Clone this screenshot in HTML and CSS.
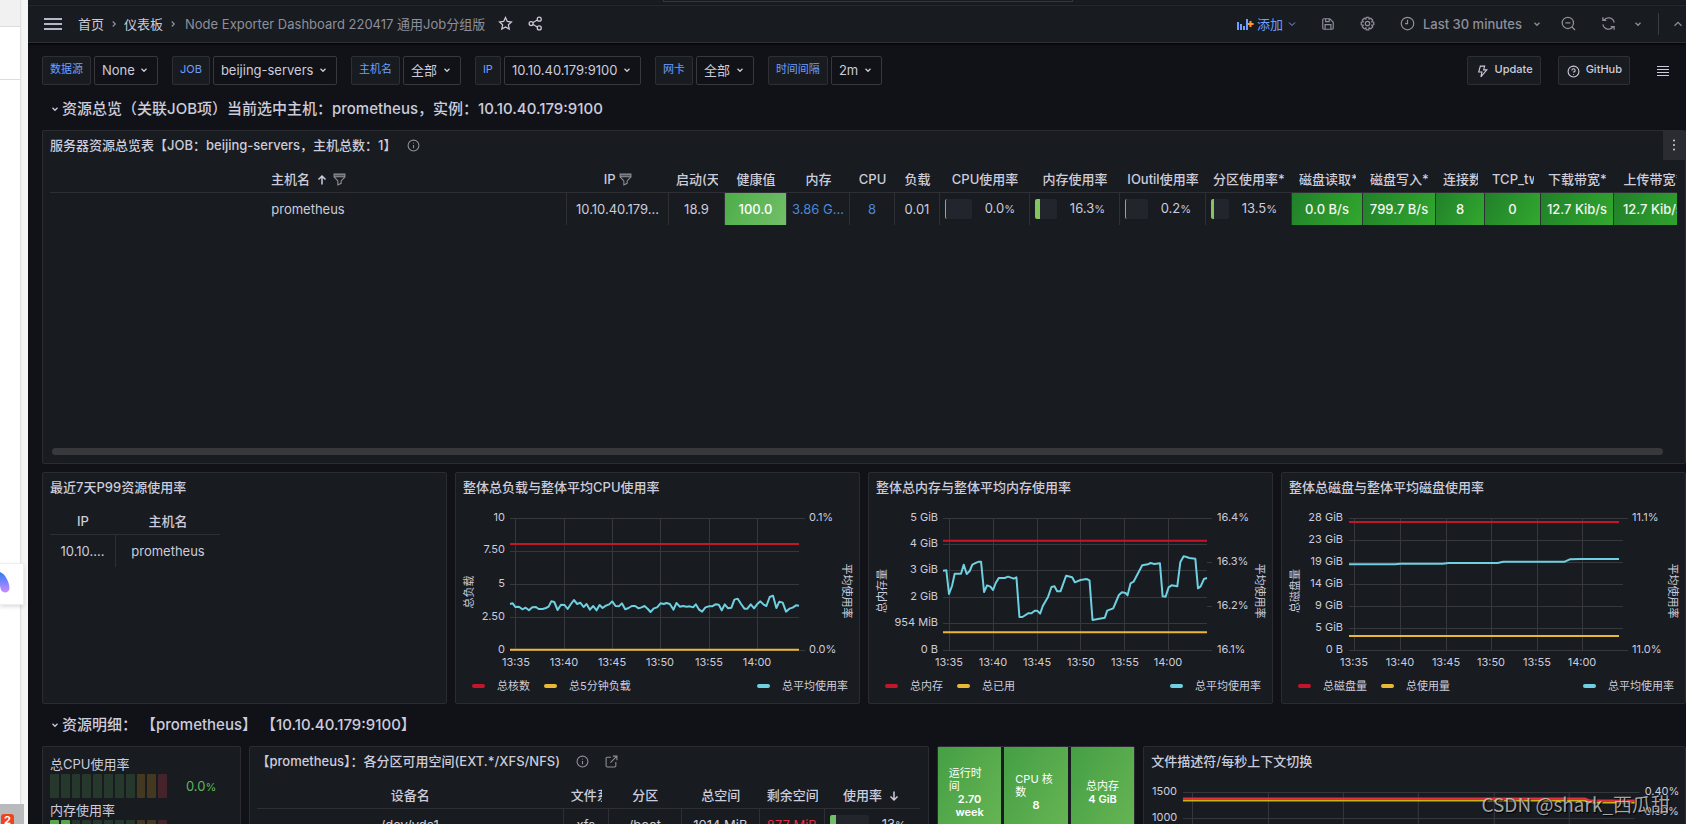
FILE: index.html
```html
<!DOCTYPE html>
<html lang="zh-CN">
<head>
<meta charset="utf-8">
<title>Node Exporter Dashboard 220417 通用Job分组版</title>
<link rel="stylesheet" href="styles.css">
</head>
<body>
<svg class="defs" aria-hidden="true">
  <symbol id="down" viewBox="0 0 24 24"><path d="M6 9l6 6 6-6"/></symbol>
  <symbol id="up" viewBox="0 0 24 24"><path d="M6 15l6-6 6 6"/></symbol>
  <symbol id="right" viewBox="0 0 24 24"><path d="M9 6l6 6-6 6"/></symbol>
  <symbol id="info" viewBox="0 0 24 24"><circle cx="12" cy="12" r="10"/><path d="M12 11v6M12 7v1.5"/></symbol>
  <symbol id="filter" viewBox="0 0 24 24"><path d="M2 2h20v5H2z" fill="currentColor" fill-opacity=".5"/><path d="M2 7l7 7.500V22l6-3v-4.500L22 7"/></symbol>
</svg>

<aside class="strip">
  <div class="strip-top"></div>
  <div class="strip-row"></div>
  <div class="strip-card"><svg width="10" height="24" viewBox="0 0 10 24"><defs><linearGradient id="lg" x1="0" y1="0" x2="0" y2="1"><stop offset="0" stop-color="#2f7bf5"/><stop offset="1" stop-color="#c98bff"/></linearGradient></defs><path d="M0 0C5 2 9 9 9.500 16C9.500 21 3 22 1 18L0 14z" fill="url(#lg)"/></svg></div>
  <div class="strip-foot"><span class="badge">2</span></div>
</aside>

<main class="app">
  <div class="searchbar"><div class="searchbox"></div></div>
  <header class="nav">
    <button class="icon-btn menu" aria-label="菜单"><svg width="18" height="12" viewBox="0 0 18 12"><path d="M0 1h18M0 6h18M0 11h18"/></svg></button>
    <nav class="crumbs">
      <a href="#">首页</a><svg class="i10 dim"><use href="#right"/></svg>
      <a href="#">仪表板</a><svg class="i10 dim"><use href="#right"/></svg>
      <span class="dim">Node Exporter Dashboard 220417 通用Job分组版</span>
    </nav>
    <button class="icon-btn star" aria-label="收藏"><svg class="i15" viewBox="0 0 24 24"><path d="M12 2.500l2.900 6.200 6.600.8-4.900 4.600 1.300 6.700-5.900-3.300-5.900 3.300 1.300-6.700-4.900-4.600 6.600-.8z"/></svg></button>
    <button class="icon-btn" aria-label="分享"><svg class="i15" viewBox="0 0 24 24"><circle cx="5" cy="12" r="3.200"/><circle cx="18" cy="5" r="3.200"/><circle cx="18" cy="19" r="3.200"/><path d="M8 10.500l7-4M8 13.500l7 4"/></svg></button>
    <div class="tools">
      <button class="add"><svg width="17" height="14" viewBox="0 0 17 14"><path d="M1 5v8M4 7v6M7 9v4M10 2v11" stroke="#6e9fff" stroke-width="2"/><path d="M10.500 7h6M13.500 4v6" stroke="#ff9830" stroke-width="2"/></svg>添加<svg class="i12"><use href="#down"/></svg></button>
      <button class="icon-btn t-save" aria-label="保存"><svg class="i14" viewBox="0 0 24 24"><path d="M3 5a2 2 0 0 1 2-2h10l6 6v10a2 2 0 0 1-2 2H5a2 2 0 0 1-2-2zM8 3v5h6V3M7 21v-8h10v8"/></svg></button>
      <button class="icon-btn t-gear" aria-label="设置"><svg class="i15" viewBox="0 0 24 24"><circle cx="12" cy="12" r="3.500"/><path d="M10 2h4l.7 3 2.600-1.500 3 3L18.800 9.200 22 10v4l-3.200.8 1.500 2.700-3 3L14.700 19 14 22h-4l-.7-3-2.600 1.500-3-3 1.500-2.700L2 14v-4l3.200-.8L3.700 6.500l3-3L9.300 5z"/></svg></button>
      <button class="range"><svg class="i15" viewBox="0 0 24 24"><circle cx="12" cy="12" r="10"/><path d="M12 6v6H8"/></svg>Last 30 minutes<svg class="i10"><use href="#down"/></svg></button>
      <button class="icon-btn t-zoom" aria-label="缩小"><svg class="i15" viewBox="0 0 24 24"><circle cx="11" cy="11" r="9"/><path d="M7 11h8M17.500 17.500l5 5"/></svg></button>
      <button class="icon-btn t-sync" aria-label="刷新"><svg class="i15" viewBox="0 0 24 24"><path d="M21 10.500A9.300 9.300 0 0 0 4.500 6.500M3 2v5h5.500M3 13.500a9.300 9.300 0 0 0 16.500 4M21 22v-5h-5.500"/></svg></button>
      <button class="icon-btn t-int" aria-label="刷新间隔"><svg class="i10"><use href="#down"/></svg></button>
      <span class="divider"></span>
      <button class="icon-btn" aria-label="收起"><svg class="i14"><use href="#up"/></svg></button>
    </div>
  </header>

  <section class="filters">
    <div class="var"><label for="v1">数据源</label><span class="pick"><select id="v1"><option>None</option></select><svg class="i10"><use href="#down"/></svg></span></div>
    <div class="var"><label for="v2">JOB</label><span class="pick"><select id="v2"><option>beijing-servers</option></select><svg class="i10"><use href="#down"/></svg></span></div>
    <div class="var"><label for="v3">主机名</label><span class="pick"><select id="v3"><option>全部</option></select><svg class="i10"><use href="#down"/></svg></span></div>
    <div class="var"><label for="v4">IP</label><span class="pick"><select id="v4"><option>10.10.40.179:9100</option></select><svg class="i10"><use href="#down"/></svg></span></div>
    <div class="var"><label for="v5">网卡</label><span class="pick"><select id="v5"><option>全部</option></select><svg class="i10"><use href="#down"/></svg></span></div>
    <div class="var"><label for="v6">时间间隔</label><span class="pick"><select id="v6"><option>2m</option></select><svg class="i10"><use href="#down"/></svg></span></div>
    <div class="links">
      <a href="#" class="link"><svg class="i13" viewBox="0 0 24 24"><path d="M8 2h8l-2 7h6L9 22l2-9H5z"/></svg>Update</a>
      <a href="#" class="link"><svg class="i13" viewBox="0 0 24 24"><circle cx="12" cy="12" r="10"/><path d="M9 10a3 3 0 1 1 3 3v1M12 16.500V18"/></svg>GitHub</a>
      <button class="icon-btn list" aria-label="链接"><svg width="12" height="10" viewBox="0 0 12 10"><path d="M0 .5h12M0 3.500h12M0 6.500h12M0 9.500h12"/></svg></button>
    </div>
  </section>

  <h2 class="row-title"><svg class="i10"><use href="#down"/></svg>资源总览（关联JOB项）当前选中主机：prometheus，实例：10.10.40.179:9100</h2>

  <div class="grid">
    <section class="panel s24 overview">
      <h3>服务器资源总览表【JOB：beijing-servers，主机总数：1】<svg class="i13 dim info"><use href="#info"/></svg></h3>
      <button class="kebab" aria-label="面板菜单"><svg width="4" height="12" viewBox="0 0 4 12"><circle cx="2" cy="1.500" r="1"/><circle cx="2" cy="6" r="1"/><circle cx="2" cy="10.500" r="1"/></svg></button>
      <div class="body">
        <table class="wide">
          <colgroup><col><col class="w102"><col class="w56"><col class="w62"><col class="w63"><col class="w45"><col class="w45"><col class="w90"><col class="w90"><col class="w86"><col class="w86"><col class="w71"><col class="w73"><col class="w49"><col class="w56"><col class="w73"><col class="w78"></colgroup>
          <thead><tr>
            <th><div>主机名 <svg class="i12 arrow" viewBox="0 0 24 24"><path d="M12 21V4M5 11l7-7 7 7"/></svg> <svg class="i13 dim"><use href="#filter"/></svg></div></th>
            <th><div>IP <svg class="i13 dim"><use href="#filter"/></svg></div></th>
            <th><div>启动(天)</div></th><th><div>健康值</div></th><th><div>内存</div></th><th><div>CPU</div></th><th><div>负载</div></th><th><div>CPU使用率</div></th><th><div>内存使用率</div></th><th><div>IOutil使用率</div></th><th><div>分区使用率*</div></th><th><div>磁盘读取*</div></th><th><div>磁盘写入*</div></th><th><div>连接数</div></th><th><div>TCP_tw</div></th><th><div>下载带宽*</div></th><th><div>上传带宽*</div></th>
          </tr></thead>
          <tbody><tr>
            <td>prometheus</td><td>10.10.40.179...</td><td>18.9</td><td class="ok">100.0</td><td class="blue">3.86 G...</td><td class="blue">8</td><td>0.01</td>
            <td><div class="bar"><i class="g1"></i><span>0.0<small>%</small></span></div></td>
            <td><div class="bar"><i class="g2"></i><span>16.3<small>%</small></span></div></td>
            <td><div class="bar"><i class="g1"></i><span>0.2<small>%</small></span></div></td>
            <td><div class="bar"><i class="g3"></i><span>13.5<small>%</small></span></div></td>
            <td class="deep">0.0 B/s</td><td class="deep">799.7 B/s</td><td class="deep">8</td><td class="deep">0</td><td class="deep">12.7 Kib/s</td><td class="deep">12.7 Kib/s</td>
          </tr></tbody>
        </table>
      </div>
      <div class="scroll"></div>
    </section>

    <section class="panel s6 mid">
      <h3>最近7天P99资源使用率</h3>
      <div class="body">
        <table class="p99"><colgroup><col class="w66"><col></colgroup>
          <thead><tr><th>IP</th><th>主机名</th></tr></thead>
          <tbody><tr><td>10.10....</td><td>prometheus</td></tr></tbody>
        </table>
      </div>
    </section>

    <section class="panel s6 mid">
      <h3>整体总负载与整体平均CPU使用率</h3>
      <svg class="chart" viewBox="0 0 403 167">
        <path class="gl" d="M54 15.500h295M54 48.500h289M54 81.500h289M54 114.500h289M54 147.500h295M59.500 15v132M108.500 15v132M156.500 15v132M204.500 15v132M253.500 15v132M301.500 15v132"/>
        <g class="end"><text x="49" y="18">10</text><text x="49" y="50">7.50</text><text x="49" y="84">5</text><text x="49" y="117">2.50</text><text x="49" y="150">0</text></g>
        <text x="353" y="18">0.1%</text><text x="353" y="150">0.0%</text>
        <g class="mid-t"><text x="60" y="163">13:35</text><text x="108" y="163">13:40</text><text x="156" y="163">13:45</text><text x="204" y="163">13:50</text><text x="253" y="163">13:55</text><text x="301" y="163">14:00</text>
        <text transform="translate(17 89) rotate(-90)">总负载</text><text transform="translate(387 88) rotate(90)">平均使用率</text></g>
        <svg x="54" y="15" width="289" height="132" viewBox="180 175 868 396" preserveAspectRatio="none" overflow="visible">
          <path class="ln red" d="M180 253H1048"/>
          <polyline class="ln cyan" points="180,433 188,431 196,442 207,441 217,449 227,444 237,452 247,443 258,442 266,448 278,448 288,445 296,441 304,425 313,427 323,451 333,435 344,436 353,448 363,433 372,421 382,433 391,429 401,442 410,433 420,450 430,439 440,452 449,436 458,445 468,438 478,434 487,425 497,439 507,440 516,431 526,449 536,445 546,439 556,439 566,446 575,443 584,439 594,448 602,457 612,446 622,443 632,431 642,433 650,430 660,433 671,450 680,430 690,441 700,439 710,441 720,440 730,443 738,434 748,450 757,456 767,443 777,440 787,440 797,434 807,435 816,452 825,434 835,446 845,444 854,420 864,417 874,433 884,447 893,447 903,434 913,446 922,434 932,425 942,435 950,439 960,412 970,408 980,445 989,426 999,429 1009,456 1019,447 1029,444 1039,437 1048,438"/>
          <path class="ln yellow" d="M180 570H1048"/>
        </svg>
      </svg>
      <div class="legend"><span><i class="b-red"></i>总核数</span><span><i class="b-yellow"></i>总5分钟负载</span><span class="last"><i class="b-cyan"></i>总平均使用率</span></div>
    </section>

    <section class="panel s6 mid">
      <h3>整体总内存与整体平均内存使用率</h3>
      <svg class="chart" viewBox="0 0 403 167">
        <path class="gl" d="M74 15.500h269M74 41.500h264M74 67.500h264M74 94.500h264M74 120.500h264M74 147.500h269M338 59.500h5M338 103.500h5M80.500 15v132M124.500 15v132M168.500 15v132M211.500 15v132M255.500 15v132M299.500 15v132"/>
        <g class="end"><text x="69" y="18">5 GiB</text><text x="69" y="44">4 GiB</text><text x="69" y="70">3 GiB</text><text x="69" y="97">2 GiB</text><text x="69" y="123">954 MiB</text><text x="69" y="150">0 B</text></g>
        <text x="348" y="18">16.4%</text><text x="348" y="62">16.3%</text><text x="348" y="106">16.2%</text><text x="348" y="150">16.1%</text>
        <g class="mid-t"><text x="80" y="163">13:35</text><text x="124" y="163">13:40</text><text x="168" y="163">13:45</text><text x="212" y="163">13:50</text><text x="256" y="163">13:55</text><text x="299" y="163">14:00</text>
        <text transform="translate(17 88) rotate(-90)">总内存量</text><text transform="translate(387 88) rotate(90)">平均使用率</text></g>
        <svg x="74" y="15" width="264" height="132" viewBox="250 175 791 396" preserveAspectRatio="none" overflow="visible">
          <path class="ln red" d="M250 243H1041"/>
          <polyline class="ln cyan" points="250,333 260,332 268,403 277,379 285,342 304,342 312,315 321,343 330,334 338,315 350,309 358,306 364,306 373,397 382,377 392,381 400,391 408,370 417,355 435,355 445,351 462,357 470,353 479,472 488,472 505,461 515,461 525,453 532,453 541,462 549,439 565,411 575,382 584,380 592,395 602,395 619,348 637,353 645,368 662,361 680,358 689,362 698,481 735,474 742,453 760,446 777,406 786,398 797,400 803,407 812,371 821,366 847,317 864,314 872,310 883,313 900,311 908,410 917,411 926,383 935,377 952,380 961,308 971,290 980,292 988,295 1006,297 1014,386 1022,380 1032,358 1041,355"/>
          <path class="ln yellow" d="M250 518H1041"/>
        </svg>
      </svg>
      <div class="legend"><span><i class="b-red"></i>总内存</span><span><i class="b-yellow"></i>总已用</span><span class="last"><i class="b-cyan"></i>总平均使用率</span></div>
    </section>

    <section class="panel s6 mid">
      <h3>整体总磁盘与整体平均磁盘使用率</h3>
      <svg class="chart" viewBox="0 0 403 167">
        <path class="gl" d="M67 15.500h279M67 37.500h274M67 59.500h274M67 81.500h274M67 103.500h274M67 125.500h274M67 147.500h279M72.500 15v132M118.500 15v132M164.500 15v132M209.500 15v132M255.500 15v132M300.500 15v132"/>
        <g class="end"><text x="61" y="18">28 GiB</text><text x="61" y="40">23 GiB</text><text x="61" y="62">19 GiB</text><text x="61" y="84">14 GiB</text><text x="61" y="106">9 GiB</text><text x="61" y="128">5 GiB</text><text x="61" y="150">0 B</text></g>
        <text x="350" y="18">11.1%</text><text x="350" y="150">11.0%</text>
        <g class="mid-t"><text x="72" y="163">13:35</text><text x="118" y="163">13:40</text><text x="164" y="163">13:45</text><text x="209" y="163">13:50</text><text x="255" y="163">13:55</text><text x="300" y="163">14:00</text>
        <text transform="translate(17 88) rotate(-90)">总磁盘量</text><text transform="translate(387 88) rotate(90)">平均使用率</text></g>
        <svg x="67" y="15" width="270" height="132" viewBox="236 175 812 396" preserveAspectRatio="none" overflow="visible">
          <path class="ln red" d="M236 187H1048"/>
          <polyline class="ln cyan" points="236,314 375,314 390,312 518,312 535,310 683,310 700,306 885,306 900,299 935,298 1048,298"/>
          <path class="ln yellow" d="M236 529H1048"/>
        </svg>
      </svg>
      <div class="legend"><span><i class="b-red"></i>总磁盘量</span><span><i class="b-yellow"></i>总使用量</span><span class="last"><i class="b-cyan"></i>总平均使用率</span></div>
    </section>
  </div>

  <h2 class="row-title"><svg class="i10"><use href="#down"/></svg>资源明细： 【prometheus】 【10.10.40.179:9100】</h2>

  <div class="grid">
    <section class="panel s3 gauges">
      <div class="g-label">总CPU使用率</div>
      <div class="g-row"><div class="cells"><i></i><i></i><i></i><i></i><i></i><i></i><i></i><i></i><i class="o"></i><i class="o"></i><i class="r"></i></div><span>0.0<small>%</small></span></div>
      <div class="g-label">内存使用率</div>
      <div class="g-row"><div class="cells"><i class="on"></i><i class="on"></i><i></i><i></i><i></i><i></i><i></i><i></i><i class="o"></i><i class="o"></i><i class="r"></i></div></div>
    </section>

    <section class="panel s10">
      <h3>【prometheus】：各分区可用空间(EXT.*/XFS/NFS)<svg class="i13 dim ext"><use href="#info"/></svg><svg class="i13 dim ext" viewBox="0 0 24 24"><path d="M11 4H4a2 2 0 0 0-2 2v14a2 2 0 0 0 2 2h14a2 2 0 0 0 2-2v-7M14.500 2H22v7.500M22 2L10 14"/></svg></h3>
      <div class="body">
        <table><colgroup><col><col class="w45"><col class="w73"><col class="w78"><col class="w65"><col class="w95"></colgroup>
          <thead><tr><th><div>设备名</div></th><th><div>文件系统</div></th><th><div>分区</div></th><th><div>总空间</div></th><th><div>剩余空间</div></th><th><div>使用率 <svg class="i12 arrow" viewBox="0 0 24 24"><path d="M12 3v17M5 13l7 7 7-7"/></svg></div></th></tr></thead>
          <tbody><tr><td>/dev/vda1</td><td>xfs</td><td>/boot</td><td>1014 MiB</td><td class="danger">877 MiB</td><td><div class="bar"><i class="g4"></i><span>13<small>%</small></span></div></td></tr></tbody>
        </table>
      </div>
    </section>

    <section class="panel s3 stats">
      <div class="tile"><span>运行时间</span><b>2.70 week</b></div>
      <div class="tile"><span>CPU 核数</span><b>8</b></div>
      <div class="tile"><span class="fit">总内存</span><b>4 GiB</b></div>
    </section>

    <section class="panel s8">
      <h3>文件描述符/每秒上下文切换</h3>
      <svg class="chart" viewBox="0 0 541 120">
        <path class="gl" d="M39 15.500h457M39 41.500h452M39 67.500h452M48.500 15v100M124.500 15v100M199.500 15v100M274.500 15v100M350.500 15v100M425.500 15v100"/>
        <text x="8" y="18">1500</text><text x="8" y="44">1000</text><text x="501" y="18">0.40%</text><text x="501" y="38">0.30%</text>
        <path class="ln olive" d="M39 23.500H441L446 25.500H491"/><path class="ln rose" d="M39 21.500H441L446 23.500H491"/>
      </svg>
    </section>
  </div>
  <div class="watermark">CSDN @shark_西瓜甜</div>
</main>
</body>
</html>
```
FILE: styles.css
```css
* { box-sizing: border-box; }
body {
  margin: 0;
  height: 100vh;
  display: flex;
  overflow: hidden;
  background: #111217;
  color: #ccccdc;
  font: 13px/20px Inter, "Noto Sans CJK SC", sans-serif;
}
button, select { font: inherit; color: inherit; background: none; border: 0; padding: 0; margin: 0; }
a { color: inherit; text-decoration: none; }
h2, h3 { margin: 0; font-weight: 500; }
svg { fill: none; stroke: currentColor; stroke-width: 2; flex: none; }
.defs { position: absolute; width: 0; height: 0; }
.i10 { width: 10px; height: 10px; stroke-width: 3; }
.i12 { width: 12px; height: 12px; }
.i13 { width: 13px; height: 13px; }
.i14 { width: 14px; height: 14px; }
.i15 { width: 15px; height: 15px; }
.dim { color: #8e8f9b; }

/* neighbouring window */
.strip { position: relative; flex: none; width: 28px; background: linear-gradient(90deg, #fff 20px, #dcdcdc 20px, #f5f5f5 22px); }
.strip-top { width: 20px; height: 27px; background: #f1f1f1; border-bottom: 1px solid #dcdcdc; }
.strip-row { width: 20px; height: 53px; border-bottom: 1px solid #dcdcdc; }
.strip-card { position: absolute; top: 563px; left: 0; width: 24px; height: 42px; padding-top: 8px; background: #fff; border: 1px solid #eee; border-left: 0; box-shadow: 0 2px 4px #0002; }
.strip-card svg { stroke: none; }
.strip-foot { position: absolute; top: 804px; bottom: 0; left: 0; width: 24px; padding: 10px 0 0 1px; background: #b9babd; }
.badge { display: block; width: 13px; height: 13px; border-radius: 3px; background: #f0421c; color: #fff; font-size: 11px; line-height: 13px; font-weight: 700; text-align: center; }

.app { position: relative; flex: 1; min-width: 0; overflow: hidden; }
.searchbar { height: 6px; background: #181b1f; border-bottom: 1px solid #2d2f34; }
.searchbox { width: 410px; height: 2px; margin: 0 auto 0 635px; border: 1px solid #34363b; border-top: 0; }
.nav { display: flex; align-items: center; height: 37px; padding: 0 1px 1px 16px; background: #181b1f; border-bottom: 1px solid #2d2f34; box-shadow: 0 1px 3px #000; }
.icon-btn { display: flex; align-items: center; }
.menu { margin-right: 16px; color: #b6b7c4; }
.crumbs { display: flex; align-items: center; gap: 5px; }
.crumbs span { margin-left: 2px; }
.star { margin: 0 15px 0 13px; }
.tools { display: flex; align-items: center; margin-left: auto; color: #8e8f9b; font-weight: 500; }
.add { display: flex; align-items: center; gap: 3px; color: #6e9fff; margin-right: 23px; font-weight: 400; }
.t-save { margin-right: 25px; }
.t-gear { margin-right: 25px; }
.range { display: flex; align-items: center; gap: 8px; margin-right: 19px; }
.range .i10 { margin-left: 2px; }
.t-zoom { margin-right: 25px; }
.t-sync { margin-right: 17px; }
.t-int { margin-right: 15px; }
.divider { width: 1px; height: 22px; background: #3a3c42; margin-right: 12px; }

.filters { display: flex; gap: 14px; padding: 13px 17px 3px 14px; }
.var { display: flex; gap: 3px; }
.var label, .link { height: 29px; padding: 0 7px; line-height: 25px; font-size: 11px; font-weight: 500; background: #181b1f; border: 1px solid #2d2f34; border-radius: 2px; }
.var label { color: #6e9fff; font-weight: 400; }
.pick { position: relative; display: flex; }
.pick select { appearance: none; height: 29px; padding: 0 22px 2px 7px; border: 1px solid #36383d; border-radius: 2px; background: #111217; }
.pick svg { position: absolute; right: 9px; top: 9px; pointer-events: none; }
.links { display: flex; margin-left: auto; align-items: center; gap: 17px; }
.link { display: flex; gap: 6px; padding: 0 7px 0 8px; }
.link svg { margin-top: 8px; }
.list { margin-left: 10px; }
.list svg { stroke-width: 1; }

.row-title { display: flex; align-items: center; height: 42px; padding-left: 22px; font-size: 15px; gap: 2px; }
.grid { display: grid; grid-template-columns: repeat(24, 1fr); gap: 8px; padding-left: 14px; }
.s3 { grid-column: span 3; }
.s6 { grid-column: span 6; }
.s8 { grid-column: span 8; }
.s10 { grid-column: span 10; }
.s24 { grid-column: span 24; }
.panel { position: relative; min-width: 0; background: #181b1f; border: 1px solid #2a2c31; border-radius: 2px; }
.panel h3 { display: flex; align-items: center; height: 28px; padding-left: 7px; font-size: 13px; white-space: nowrap; }
.info { margin-left: 10px; }
.ext { margin-left: 16px; }
.overview { display: flex; flex-direction: column; min-height: 334px; }
.mid { min-height: 232px; }
.kebab { position: absolute; top: 0; right: 0; width: 22px; height: 29px; background: #2b2c31; }
.kebab svg { fill: currentColor; stroke: none; }
.scroll { height: 7px; margin: auto 22px 8px 9px; border-radius: 4px; background: #37393d; }

.body { margin: 8px 8px 0 7px; overflow: hidden; }
table { width: 100%; table-layout: fixed; border-collapse: separate; border-spacing: 0; text-align: center; white-space: nowrap; }
.wide { width: calc(100% + 15px); }
.p99 { width: 170px; }
th { height: 26px; padding: 0 7px 2px; font-weight: 500; border-bottom: 1px solid #2d2f34; }
th div { overflow: hidden; }
th svg { vertical-align: -2px; }
.arrow { margin: 0 2px; stroke-width: 3; }
td { height: 32px; padding: 0 0 1px; border-right: 1px solid #2d2f34; }
td:last-child { border-right: 0; }
.blue { color: #4e86d8; }
.danger { color: #e02f44; }
.ok { color: #fff; font-weight: 500; background: linear-gradient(120deg, #4cad48, #73bf69); }
.deep { color: #f2f5f2; font-weight: 500; background: linear-gradient(120deg, #21802a, #32a82e); }
small { font-size: 11px; }
.bar { display: flex; align-items: center; gap: 13px; padding: 0 14px 0 5px; }
.bar i { flex: 1; height: 20px; border-radius: 2px; background: #22252b; border-left: 1px solid #73bf69; }
.bar .g2 { border-left: 5px solid #84c45c; }
.bar .g3 { border-left: 3px solid #84c45c; }
.bar .g4 { border-left: 6px solid #73bf69; }
.w45 { width: 45px; } .w49 { width: 49px; } .w56 { width: 56px; } .w62 { width: 62px; }
.w63 { width: 63px; } .w65 { width: 65px; } .w66 { width: 66px; } .w71 { width: 71px; }
.w73 { width: 73px; } .w78 { width: 78px; } .w86 { width: 86px; } .w90 { width: 90px; }
.w95 { width: 95px; } .w102 { width: 102px; }

.chart { display: block; width: 100%; margin-top: 2px; }
.chart text { font-size: 11px; fill: #ccccdc; stroke: none; }
.end { text-anchor: end; }
.mid-t { text-anchor: middle; }
.gl { stroke: #36383d; stroke-width: 1; }
.ln { stroke-width: 2; vector-effect: non-scaling-stroke; stroke-linejoin: round; }
.red { stroke: #c4162a; }
.yellow { stroke: #eab839; }
.cyan { stroke: #6ed0e0; }
.rose { stroke: #e02f44; }
.olive { stroke: #c8b414; }
.legend { display: flex; gap: 14px; height: 32px; padding: 0 11px 0 16px; font-size: 11px; line-height: 32px; }
.legend span { display: flex; align-items: center; gap: 12px; }
.legend i { width: 13px; height: 4px; border-radius: 2px; }
.legend .last { margin-left: auto; }
.b-red { background: #c4162a; }
.b-yellow { background: #eab839; }
.b-cyan { background: #6ed0e0; }

.gauges { padding: 7px 7px 0; }
.g-label { height: 20px; line-height: 20px; }
.g-row { display: flex; align-items: center; gap: 19px; margin-bottom: 2px; color: #5fb85a; }
.cells { display: flex; gap: 2px; width: 117px; height: 24px; }
.cells i { flex: 1; border-radius: 1px; background: #26382c; }
.cells .o { background: #443821; }
.cells .r { background: #44232b; }
.cells .on { background: #56a64b; }
.stats { display: flex; gap: 3px; height: 95px; }
.tile { flex: 1; display: flex; flex-direction: column; align-items: center; justify-content: center; padding: 0 11px 2px; color: #fff; font-size: 11px; line-height: 13px; text-align: center; background: linear-gradient(120deg, #459f45, #69b654); }
.tile span { width: 100%; text-align: left; }
.tile .fit { text-align: center; }
.tile b { font-weight: 600; }
.watermark { position: absolute; right: 16px; bottom: 6px; font: 19px/28px "Noto Sans CJK SC", sans-serif; color: #d8d8d8c0; text-shadow: 1px 1px 1px #000; }
```
